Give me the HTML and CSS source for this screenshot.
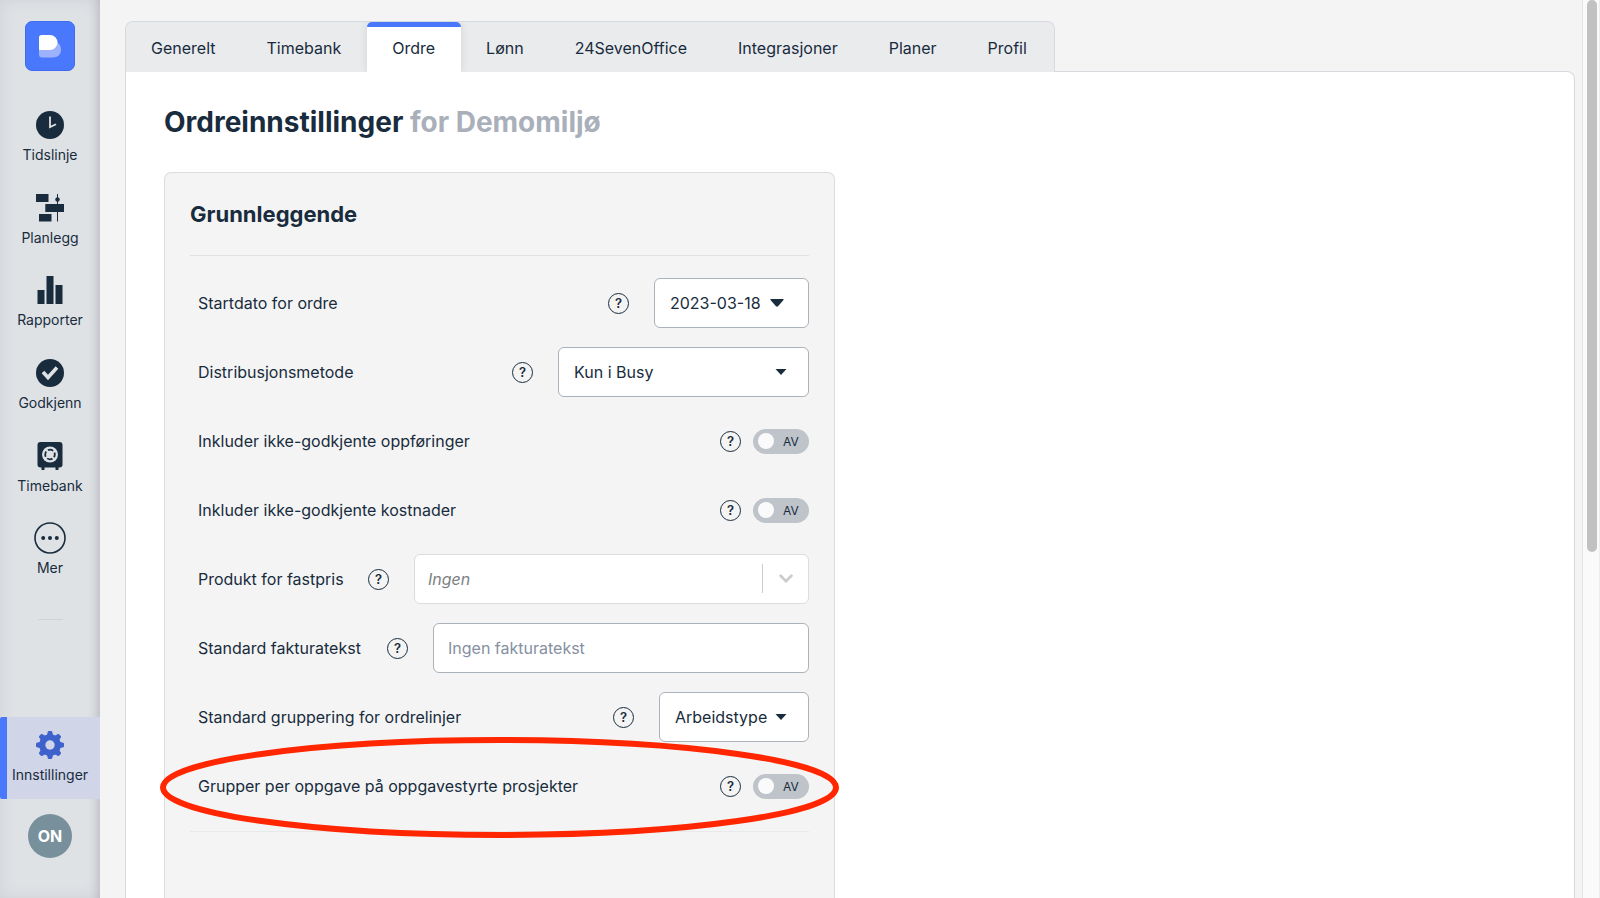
FILE: index.html
```html
<!DOCTYPE html>
<html lang="nb">
<head>
<meta charset="utf-8">
<title>Ordreinnstillinger</title>
<link rel="stylesheet" href="styles.css">
</head>
<body>
<div class="app">
  <aside class="sidebar">
    <a class="logo" href="#" aria-label="Hjem">
      <svg width="50" height="50" viewBox="0 0 50 50"><path d="M31 21c3.500 1 5 4.500 5 8 0 4.500-3.500 7.500-8 7.500H17a3 3 0 0 1-3-3V27z" fill="#9db2fd"/><path d="M14 16.500A2.500 2.500 0 0 1 16.500 14H25a7.500 7.500 0 0 1 0 15H14z" fill="#fff"/></svg>
    </a>
    <nav class="nav">
      <a class="nav-item" href="#"><svg class="icon" viewBox="0 0 32 32"><circle cx="16" cy="16" r="14" fill="#182c3d"/><path d="M16 7.500V18l6-2.800" fill="none" stroke="#dfe2e5" stroke-width="1.800"/></svg><span>Tidslinje</span></a>
      <a class="nav-item" href="#"><svg class="icon" viewBox="0 0 32 32"><path d="M2 2h12.500v8H2zM11.300 12H30v8H11.300zM5 22h12.500v7.500H5z" fill="#182c3d"/><path d="M23.500 2v27.500" stroke="#182c3d"/><circle cx="23.500" cy="7.500" r="2.200" fill="#182c3d"/></svg><span>Planlegg</span></a>
      <a class="nav-item" href="#"><svg class="icon" viewBox="0 0 32 32"><path d="M3.500 16h7v14h-7zM12.500 2h7v28h-7zM21.500 11h7v19h-7z" fill="#182c3d"/></svg><span>Rapporter</span></a>
      <a class="nav-item" href="#"><svg class="icon" viewBox="0 0 32 32"><circle cx="16" cy="16" r="14" fill="#182c3d"/><path d="M9 15l5 5.500 9-10" fill="none" stroke="#dfe2e5" stroke-width="3.600"/></svg><span>Godkjenn</span></a>
      <a class="nav-item" href="#"><svg class="icon" viewBox="0 0 32 32"><rect x="3.500" y="2" width="25" height="25.500" rx="3" fill="#182c3d"/><path d="M7.500 27h3v3h-3zM21.500 27h3v3h-3z" fill="#182c3d"/><circle cx="16" cy="14.500" r="8" fill="#dfe2e5"/><circle cx="16" cy="14.500" r="4.800" fill="none" stroke="#182c3d" stroke-width="1.800" stroke-dasharray="5.540 2" stroke-dashoffset="2.770"/></svg><span>Timebank</span></a>
      <a class="nav-item" href="#"><svg class="icon" viewBox="0 0 32 32"><circle cx="16" cy="16" r="15" fill="none" stroke="#182c3d" stroke-width="1.600"/><circle cx="9.200" cy="16" r="2" fill="#182c3d"/><circle cx="16" cy="16" r="2" fill="#182c3d"/><circle cx="22.800" cy="16" r="2" fill="#182c3d"/></svg><span>Mer</span></a>
    </nav>
    <hr class="nav-divider">
    <div class="nav-bottom">
      <a class="nav-item nav-item-active" href="#"><svg class="icon" viewBox="0 0 32 32"><g fill="#3d62cb"><circle cx="16" cy="16" r="10.800"/><g id="teeth"><path id="tooth" d="M12.800 7l1-4.300q.3-.7 1-.7h2.400q.7 0 1 .7l1 4.300z"/><use href="#tooth" transform="rotate(45 16 16)"/><use href="#tooth" transform="rotate(90 16 16)"/><use href="#tooth" transform="rotate(135 16 16)"/></g><use href="#teeth" transform="rotate(180 16 16)"/></g><circle cx="16" cy="16" r="4.700" fill="#d1d5e8"/></svg><span>Innstillinger</span></a>
      <button class="avatar" type="button">ON</button>
    </div>
  </aside>

  <main class="main">
    <nav class="tabs">
      <a class="tab" href="#">Generelt</a>
      <a class="tab" href="#">Timebank</a>
      <a class="tab tab-active" href="#">Ordre</a>
      <a class="tab" href="#">Lønn</a>
      <a class="tab" href="#">24SevenOffice</a>
      <a class="tab" href="#">Integrasjoner</a>
      <a class="tab" href="#">Planer</a>
      <a class="tab" href="#">Profil</a>
    </nav>
    <section class="panel">
      <h1 class="title">Ordreinnstillinger <span class="title-muted">for Demomiljø</span></h1>
      <form class="card">
        <h2 class="card-title">Grunnleggende</h2>
        <div class="rows">
          <div class="row">
            <label class="label" for="start">Startdato for ordre</label>
            <button class="help" type="button">?</button>
            <button class="control control-date" id="start" type="button">2023-03-18<svg class="caret" viewBox="0 0 14 8"><path d="M1 0h12q1 .3.500 1L8 7.300q-1 .9-2 0L.5 1Q0 .3 1 0z"/></svg></button>
          </div>
          <div class="row">
            <label class="label" for="method">Distribusjonsmetode</label>
            <button class="help" type="button">?</button>
            <div class="select-wrap select-method">
              <select class="control" id="method"><option>Kun i Busy</option></select>
              <svg class="caret caret-over" viewBox="0 0 14 8"><path d="M1.500 1h11L7 7z"/></svg>
            </div>
          </div>
          <div class="row">
            <label class="label" for="entries">Inkluder ikke-godkjente oppføringer</label>
            <button class="help help-tight" type="button">?</button>
            <label class="switch"><input class="switch-input" id="entries" type="checkbox"><span>AV</span></label>
          </div>
          <div class="row">
            <label class="label" for="costs">Inkluder ikke-godkjente kostnader</label>
            <button class="help help-tight" type="button">?</button>
            <label class="switch"><input class="switch-input" id="costs" type="checkbox"><span>AV</span></label>
          </div>
          <div class="row">
            <label class="label" for="product">Produkt for fastpris</label>
            <button class="help" type="button">?</button>
            <div class="select-wrap select-product">
              <select class="control control-light" id="product"><option>Ingen</option></select>
              <svg class="chevron" viewBox="0 0 16 10"><path d="M2 2l6 6 6-6"/></svg>
            </div>
          </div>
          <div class="row">
            <label class="label" for="text">Standard fakturatekst</label>
            <button class="help" type="button">?</button>
            <input class="control control-text" id="text" type="text" placeholder="Ingen fakturatekst">
          </div>
          <div class="row">
            <label class="label" for="group">Standard gruppering for ordrelinjer</label>
            <button class="help" type="button">?</button>
            <div class="select-wrap select-group">
              <select class="control" id="group"><option>Arbeidstype</option></select>
              <svg class="caret caret-over" viewBox="0 0 14 8"><path d="M1.500 1h11L7 7z"/></svg>
            </div>
          </div>
          <div class="row row-marked">
            <label class="label" for="pertask">Grupper per oppgave på oppgavestyrte prosjekter</label>
            <button class="help help-tight" type="button">?</button>
            <label class="switch"><input class="switch-input" id="pertask" type="checkbox"><span>AV</span></label>
            <svg class="marker" viewBox="0 0 679 101" preserveAspectRatio="none"><ellipse cx="339.500" cy="50.500" rx="336.500" ry="47.500" fill="none" stroke="#ff2600" stroke-width="6"/></svg>
          </div>
        </div>
      </form>
    </section>
  </main>
  <div class="scroll-track"><div class="scroll-thumb"></div></div>
</div>
</body>
</html>
```
FILE: styles.css
```css
* { box-sizing: border-box; }
body {
  margin: 0;
  font-family: Inter, "Open Sans", sans-serif;
  font-size: 16px;
  color: #182c3d;
  background: #f4f4f4;
}
button, input, select { font: inherit; color: inherit; margin: 0; }
a { color: inherit; text-decoration: none; }
.app { display: flex; height: 100vh; overflow: hidden; }

.sidebar {
  display: flex;
  flex-direction: column;
  flex: none;
  width: 100px;
  padding-top: 21px;
  background: #dee2e5;
  box-shadow: inset -10px 0 10px -8px rgba(40, 30, 50, .16), inset 0 0 16px rgba(60, 20, 60, .08);
}
.logo {
  align-self: center;
  width: 50px;
  height: 50px;
  border: 1px solid #3f6bf5;
  border-radius: 7px;
  background: #4a78fc;
}
.logo svg { display: block; margin: -1px; }
.nav {
  display: grid;
  grid-auto-rows: 1fr;
  height: 496px;
  margin-top: 26px;
}
.nav-item {
  display: flex;
  flex-direction: column;
  align-items: center;
  gap: 4px;
  padding-top: 12px;
  font-size: 14px;
  line-height: 20px;
}
.icon { width: 32px; height: 32px; }
.nav-divider {
  width: 25px;
  margin: 26px auto 0;
  border: 0;
  border-top: 1px solid #d0d4d8;
}
.nav-bottom { margin-top: auto; padding-bottom: 40px; }
.nav-item-active {
  height: 82px;
  border-left: 7px solid #4a78fc;
  border-radius: 2px 0 0 2px;
  padding-right: 7px;
  background: #d1d5e8;
  white-space: nowrap;
}
.avatar {
  display: block;
  width: 44px;
  height: 44px;
  margin: 15px auto 0;
  padding: 0;
  border: 0;
  border-radius: 50%;
  background: #78909b;
  color: #fff;
  font-weight: 700;
  font-size: 16px;
}

.main {
  display: flex;
  flex-direction: column;
  flex: 1;
  min-width: 0;
  padding: 21px 7px 0 25px;
}
.tabs {
  display: flex;
  align-self: flex-start;
  height: 51px;
  margin-bottom: -1px;
  padding-right: 1px;
  border: 1px solid #d7dbdf;
  border-bottom: 0;
  border-radius: 8px 8px 0 0;
  background: #eaebed;
  z-index: 1;
}
.tab {
  padding: 0 26px 0 25px;
  line-height: 52px;
}
.tab-active {
  border-top: 5px solid #4a78fc;
  border-radius: 5px 5px 0 0;
  background: #fff;
  line-height: 42px;
  box-shadow: 0 0 10px rgba(0, 0, 0, .1);
  clip-path: inset(0 -10px 0 -10px);
}
.panel {
  display: flex;
  flex-direction: column;
  flex: 1;
  padding: 31px 38px 0;
  border: 1px solid #d7dbdf;
  border-bottom: 0;
  border-radius: 0 8px 0 0;
  background: #fff;
}
.title { margin: 0; font-size: 28px; line-height: 38px; font-weight: 700; }
.title-muted { color: #a9b0b9; }
.card {
  flex: 1;
  max-width: 671px;
  margin-top: 31px;
  padding: 0 25px;
  border: 1px solid #d9dde1;
  border-bottom: 0;
  border-radius: 7px 7px 0 0;
  background: #f4f4f4;
}
.card-title {
  margin: 0;
  padding: 24px 0;
  font-size: 22px;
  line-height: 34px;
  font-weight: 700;
  border-bottom: 1px solid #dfe1e3;
}
.rows {
  display: flex;
  flex-direction: column;
  gap: 19px;
  padding: 22px 0 20px;
  border-bottom: 1px solid #e8e9ea;
}
.row { display: flex; align-items: center; height: 50px; padding-left: 8px; }
.label { margin-right: auto; }
.help {
  flex: none;
  width: 21px;
  height: 21px;
  margin-right: 25px;
  padding: 0;
  border: 1px solid #182c3d;
  border-radius: 50%;
  background: none;
  font-size: 13px;
  line-height: 18px;
  font-weight: 600;
}
.help-tight { margin-right: 12px; }
.control {
  width: 100%;
  height: 50px;
  padding: 0 15px;
  border: 1px solid #abb2ba;
  border-radius: 6px;
  background: #fff;
  appearance: none;
  outline: 0;
}
.control-date { display: flex; align-items: center; gap: 9px; width: 155px; }
.caret { width: 14px; height: 8px; fill: #182c3d; }
.select-wrap { position: relative; }
.select-method { width: 251px; }
.select-product { width: 395px; }
.select-group { width: 150px; }
.caret-over { position: absolute; right: 21px; top: 21px; pointer-events: none; }
.control-light { padding: 0 13px; border-color: #d9dde1; color: #7d7f82; font-style: italic; }
.chevron {
  position: absolute;
  top: 10px;
  right: 0;
  width: 47px;
  height: 29px;
  padding: 10px 15px;
  border-left: 1px solid #ccc;
  fill: none;
  stroke: #ccc;
  stroke-width: 3;
  stroke-linecap: round;
  pointer-events: none;
}
.control-text { width: 376px; padding: 0 14px; }
.control-text::placeholder { color: #8590a0; opacity: 1; }
.switch {
  display: flex;
  align-items: center;
  gap: 9px;
  width: 56px;
  height: 25px;
  padding-left: 5px;
  border-radius: 13px;
  background: #bfc4cb;
  font-size: 12px;
}
.switch-input {
  width: 16px;
  height: 16px;
  border-radius: 50%;
  background: #fafafa;
  appearance: none;
}
.row-marked { position: relative; }
.marker {
  position: absolute;
  top: -24px;
  left: -30px;
  width: calc(100% + 60px);
  height: 101px;
  pointer-events: none;
}
.scroll-track {
  flex: none;
  width: 18px;
  padding: 0 4px;
  border-left: 1px solid #e6e6e6;
  border-right: 1px solid #ededed;
  background: #fafafa;
}
.scroll-thumb { width: 10px; height: 61.5%; border-radius: 5px; background: #c1c1c1; }
```
